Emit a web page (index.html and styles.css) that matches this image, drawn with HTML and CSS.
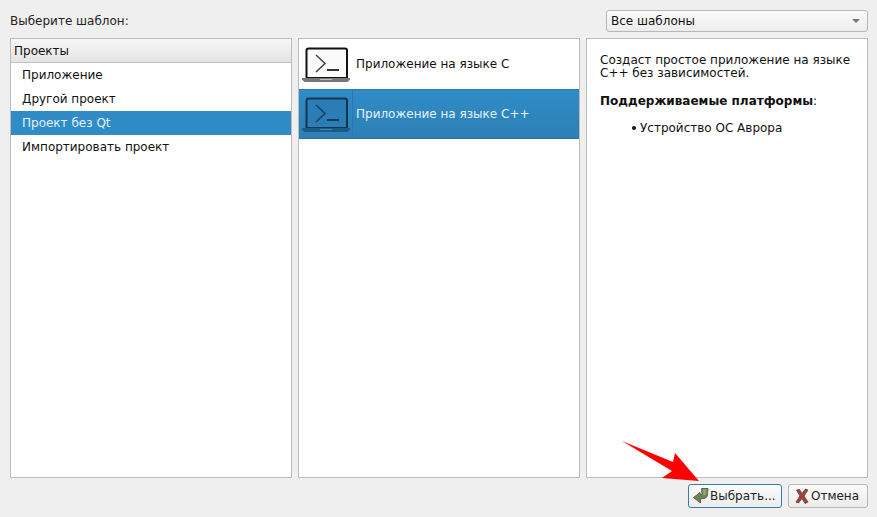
FILE: index.html
```html
<!DOCTYPE html>
<html lang="ru">
<head>
<meta charset="utf-8">
<title>Выберите шаблон</title>
<link rel="stylesheet" href="styles.css">
</head>
<body>
<div class="dialog">
  <div class="top">
    <span class="label">Выберите шаблон:</span>
    <div class="combo"><span>Все шаблоны</span><svg class="caret" width="8" height="4" viewBox="0 0 8 4"><path d="M0 0h8L4 4z" fill="#777"/></svg></div>
  </div>
  <div class="panels">
    <div class="panel">
      <div class="head">Проекты</div>
      <div class="cat">Приложение</div>
      <div class="cat">Другой проект</div>
      <div class="cat sel">Проект без Qt</div>
      <div class="cat">Импортировать проект</div>
    </div>
    <div class="panel">
      <div class="tpl">
        <div class="ico">
          <svg width="50" height="36" viewBox="0 0 50 36"><path d="M5.500 32V4.500a2 2 0 0 1 2-2h36.500a2 2 0 0 1 2 2V32z" fill="#fafafa" stroke="#111" stroke-width="2"/><path d="M15 9l9 8.500-9 8.500" fill="none" stroke="#444" stroke-width="1.500"/><path d="M26 24h12" stroke="#333" stroke-width="2"/><path d="M1 32h48v1.500l-2.500 2.500h-43l-2.500-2.500z" fill="#777"/><path d="M19 33h12v1h-12z" fill="#bbb"/></svg>
        </div>
        <div class="name">Приложение на языке C</div>
      </div>
      <div class="tpl on">
        <div class="ico">
          <svg width="50" height="36" viewBox="0 0 50 36"><path d="M5.500 32V4.500a2 2 0 0 1 2-2h36.500a2 2 0 0 1 2 2V32z" fill="#2a7db5" stroke="#0f3550" stroke-width="2"/><path d="M15 9l9 8.500-9 8.500" fill="none" stroke="#15405f" stroke-width="1.500"/><path d="M26 24h12" stroke="#113a58" stroke-width="2"/><path d="M1 32h48v1.500l-2.500 2.500h-43l-2.500-2.500z" fill="#1f5a85"/><path d="M19 33h12v1h-12z" fill="#3d88bb"/></svg>
        </div>
        <div class="name">Приложение на языке C++</div>
      </div>
    </div>
    <div class="panel desc">
      <p>Создаст простое приложение на языке C++ без зависимостей.</p>
      <p><b>Поддерживаемые платформы</b>:</p>
      <ul><li>Устройство ОС Аврора</li></ul>
    </div>
  </div>
  <div class="actions">
    <button class="btn primary"><svg width="16" height="16" viewBox="0 0 16 16"><path d="M8.500 .5L15 .5 14.500 7Q14 10 11 10.500L7.500 11 7.500 15 .5 9.500 7 4.500 7.500 7 9 6.500z" fill="#6f8455" stroke="#46553a" stroke-width=".8"/><path d="M10 1.500h3.500L13 6.500 10 7.500z" fill="#8fa376"/></svg>Выбрать...</button>
    <button class="btn cancel"><svg width="14" height="16" viewBox="0 0 14 16"><path d="M1.500 2l3-.5L7 5.500 10.500 1 13 2 9 8l4 6-3 1.500L7 10.500 3.500 15 1 14l4-6z" fill="#a4413f" stroke="#5b3a3a" stroke-width=".8"/></svg>Отмена</button>
  </div>
</div>
<svg class="arrow" width="877" height="517" viewBox="0 0 877 517"><polygon points="622,441 673,462 675,453 699,481 662,478 672,471" fill="#fe0000"/></svg>
</body>
</html>
```
FILE: styles.css
```css
* { box-sizing: border-box; }
html, body { margin: 0; height: 100%; }
body {
  background: #efefef;
  color: #111;
  font: 12px/14px "DejaVu Sans", sans-serif;
  overflow: hidden;
}
.dialog {
  display: flex;
  flex-direction: column;
  height: 517px;
  padding: 10px 9px 9px 10px;
}
.top {
  display: flex;
  justify-content: space-between;
  align-items: center;
  height: 22px;
}
.label { color: #222; }
.combo {
  width: 262px;
  height: 22px;
  display: flex;
  align-items: center;
  justify-content: space-between;
  padding: 0 7px 0 4px;
  border: 1px solid #b8b8b8;
  border-radius: 3px;
  background: linear-gradient(#fbfbfb, #ececec);
}
.panels {
  flex: 1;
  display: grid;
  grid-template-columns: 282px 282px 282px;
  gap: 6px;
  margin-top: 6px;
  min-height: 0;
}
.panel {
  background: #fff;
  border: 1px solid #bcbcbc;
}
.head {
  height: 24px;
  line-height: 25px;
  padding-left: 3px;
  background: linear-gradient(#f7f7f7, #e4e4e4);
  border-bottom: 1px solid #c2c2c2;
}
.cat {
  height: 24px;
  line-height: 24px;
  padding-left: 11px;
}
.cat.sel, .tpl.on .name { color: #e6f2fa; }
.cat.sel { background: #308cc6; }
.tpl {
  display: flex;
  height: 50px;
  align-items: center;
}
.tpl.on {
  background: linear-gradient(#308cc6, #2c80b6);
  border-top: 1px solid #2a7db4;
  border-bottom: 1px solid #2a76a9;
}
.ico {
  width: 54px;
  height: 100%;
  display: flex;
  align-items: center;
  padding-left: 2px;
  flex: none;
}
.tpl.on .ico { border-right: 1px solid #2a78ad; }
.name { padding-left: 3px; }
.desc { padding: 15px 13px; color: #111; }
.desc p { margin: 0 0 15px; line-height: 13px; }
.desc ul { margin: 0; padding: 0 0 0 32px; }
.desc li {
  list-style: none;
  display: flex;
  align-items: center;
  gap: 4px;
  margin-top: -2px;
}
.desc li::before {
  content: "";
  width: 4px;
  height: 4px;
  border-radius: 50%;
  background: #111;
}
.actions {
  display: flex;
  justify-content: flex-end;
  gap: 6px;
  margin-top: 6px;
}
.btn {
  height: 24px;
  width: 80px;
  display: flex;
  align-items: center;
  gap: 1px;
  padding: 0 4px;
  font: inherit;
  color: #222;
  border: 1px solid #b8b8b8;
  border-radius: 3px;
  background: linear-gradient(#fbfbfb, #ececec);
}
.btn.cancel { padding-left: 6px; gap: 2px; }
.btn.primary { width: 94px; border-color: #3a7ca8; }
.arrow { position: absolute; left: 0; top: 0; pointer-events: none; }
```
